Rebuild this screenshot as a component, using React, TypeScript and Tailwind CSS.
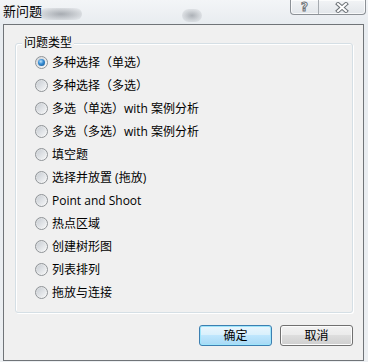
import React from "react";

const items = [
  "多种选择（单选）",
  "多种选择（多选）",
  "多选（单选）with 案例分析",
  "多选（多选）with 案例分析",
  "填空题",
  "选择并放置 (拖放)",
  "Point and Shoot",
  "热点区域",
  "创建树形图",
  "列表排列",
  "拖放与连接",
];

function Radio({ checked }: { checked: boolean }) {
  return (
    <span className="w-[13px] h-[13px] rounded-full border border-[#8f9397] bg-[linear-gradient(135deg,#d4d7da,#fbfbfb)] flex items-center justify-center shrink-0">
      <span className="w-[9px] h-[9px] rounded-full bg-[linear-gradient(135deg,#c9ced4,#f4f5f6)] flex items-center justify-center">
        {checked && (
          <span className="w-[7px] h-[7px] rounded-full bg-[radial-gradient(circle_at_40%_35%,#bfe4fb_0%,#3a8fd6_40%,#0d4d86_100%)]" />
        )}
      </span>
    </span>
  );
}

export default function App() {
  return (
    <div
      className="relative w-[368px] h-[362px] overflow-hidden bg-[linear-gradient(180deg,#f3f5f7_0px,#e8ecf0_24px,#eceff2_100%)] text-[12px] text-black"
      style={{ fontFamily: '"Open Sans","Noto Sans CJK SC",sans-serif' }}
    >
      {/* blurred aero background blobs */}
      <div className="absolute left-[40px] top-[8px] w-[42px] h-[12px] rounded-full bg-[radial-gradient(ellipse_at_center,rgba(110,116,124,0.55)_0%,rgba(110,116,124,0.25)_55%,rgba(110,116,124,0)_100%)]" />
      <div className="absolute left-[182px] top-[9px] w-[20px] h-[13px] rounded-full bg-[radial-gradient(ellipse_at_center,rgba(110,116,124,0.5)_0%,rgba(110,116,124,0.2)_55%,rgba(110,116,124,0)_100%)]" />

      {/* title bar */}
      <div className="relative h-[24px] flex items-start pl-[3px] pt-[1px]">
        <span className="text-[13px] leading-[20px] text-black">新问题</span>
      </div>

      {/* caption buttons */}
      <div className="absolute top-0 left-[290px] flex h-[15px] border border-t-0 border-[#8c9196] rounded-b-[4px] bg-[linear-gradient(180deg,#f2f4f6,#e2e6ea)] shadow-[inset_0_0_0_1px_rgba(255,255,255,0.7)]">
        <div className="w-[28px] flex items-center justify-center border-r border-[#a6abb0]">
          <span className="font-bold text-[12px] leading-[12px] text-white [-webkit-text-stroke:1px_#6d7378] [font-family:'DejaVu_Sans',sans-serif]">?</span>
        </div>
        <div className="w-[46px] flex items-center justify-center">
          <svg width="14" height="11" viewBox="0 0 14 11">
            <path d="M3 2 L11 9 M11 2 L3 9" stroke="#6d7378" strokeWidth="4" strokeLinecap="square" />
            <path d="M3 2 L11 9 M11 2 L3 9" stroke="#ffffff" strokeWidth="2" strokeLinecap="square" />
          </svg>
        </div>
      </div>

      {/* client area */}
      <div className="ml-[3px] mr-[4px] h-[337px] border border-[#707478] bg-[#f0f0f0] flex flex-col">
        <div className="relative ml-[11px] mt-[18px] w-[338px] h-[270px] rounded-[3px] border border-[#d5dfe5] shadow-[inset_1px_1px_0_#ffffff,1px_1px_0_#ffffff] pt-[7px] pl-[19px] flex flex-col">
          <span className="absolute left-[6px] top-[-9px] px-[2px] bg-[#f0f0f0] leading-[16px]">问题类型</span>
          {items.map((t, i) => (
            <div key={i} className="h-[23px] flex items-center gap-[4px]">
              <Radio checked={i === 0} />
              <span className="leading-[16px] whitespace-nowrap">{t}</span>
            </div>
          ))}
        </div>

        <div className="mt-[12px] pr-[10px] flex justify-end gap-[8px]">
          <button className="w-[73px] h-[21px] rounded-[3px] border border-[#3c7fb1] bg-[linear-gradient(180deg,#eaf6fd_0%,#d9f0fc_45%,#bee6fd_50%,#a7d9f5_100%)] shadow-[inset_0_0_0_1px_#9ee5fb] flex items-center justify-center leading-[16px]">
            确定
          </button>
          <button className="w-[73px] h-[21px] rounded-[3px] border border-[#707070] bg-[linear-gradient(180deg,#f2f2f2_0%,#ebebeb_45%,#dddddd_50%,#cfcfcf_100%)] shadow-[inset_0_0_0_1px_#fcfcfc] flex items-center justify-center leading-[16px]">
            取消
          </button>
        </div>
      </div>
    </div>
  );
}
